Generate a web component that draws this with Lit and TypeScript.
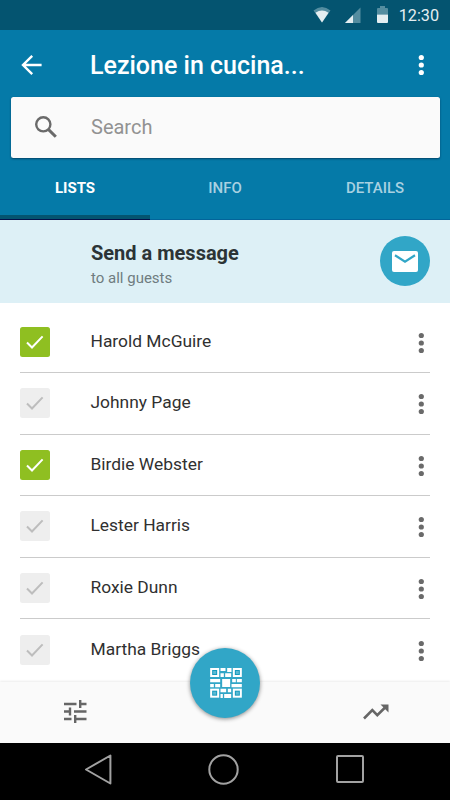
import { LitElement, html, css, svg } from "lit";
import { customElement } from "lit/decorators.js";
import { classMap } from "lit/directives/class-map.js";

interface Guest { name: string; checked: boolean; }

const guests: Guest[] = [
  { name: "Harold McGuire", checked: true },
  { name: "Johnny Page", checked: false },
  { name: "Birdie Webster", checked: true },
  { name: "Lester Harris", checked: false },
  { name: "Roxie Dunn", checked: false },
  { name: "Martha Briggs", checked: false },
];

const dots = html`<svg class="dots" width="8" height="22" viewBox="0 0 8 22" fill="currentColor">
  <circle cx="4.3" cy="3.5" r="2.6" /><circle cx="4.3" cy="11" r="2.6" /><circle cx="4.3" cy="18.5" r="2.6" />
</svg>`;

const finder = (x: number, y: number) => svg`
  <rect x=${x + 3} y=${y + 3} width="21" height="21" stroke="#fff" stroke-width="6" fill="#139bbf" />
  <rect x=${x + 9} y=${y + 9} width="9" height="9" fill="#5db9d2" />`;

@customElement("app-root")
export class AppRoot extends LitElement {
  static styles = css`
    :host { display: flex; flex-direction: column; width: 450px; height: 800px; overflow: hidden;
      background: #fff; font-family: Roboto, "Noto Sans", sans-serif; color: #333; }
    svg { display: block; flex: none; }
    .status { height: 30px; flex: none; box-sizing: border-box; background: #045470; color: #e4eef1; display: flex;
      align-items: center; justify-content: flex-end; padding-right: 11px; font-size: 16.2px; }
    .status .wifi { margin-right: 14px; }
    .status .cell { margin-right: 16px; }
    .status .batt { margin: -2px 11px 0 0; }
    .clock { line-height: 30px; padding-top: 1px; }
    .header { height: 190px; flex: none; box-sizing: border-box; background: #057aa8; color: #fff;
      border-bottom: 1px solid #03649a; display: flex; flex-direction: column; }
    .bar { height: 67px; display: flex; align-items: center; padding: 3px 25px 0 21px; box-sizing: border-box; }
    .title { margin: 2px auto 0 48px; font-size: 25px; font-weight: 500; line-height: 30px; }
    .search { height: 60.5px; margin: 0 10px 0 11px; background: #fafafa; border-radius: 2.5px; display: flex;
      align-items: center; padding-left: 24px; box-shadow: 0 1px 2px rgba(0, 30, 60, .6); box-sizing: border-box; }
    .search .label { margin-left: 34px; font-size: 20px; color: #929292; }
    .tabs { flex: 1; margin-bottom: -1px; display: grid; grid-template-columns: repeat(3, 1fr); text-align: center; }
    .tab { box-sizing: border-box; padding-top: 1px; line-height: 59px; font-size: 15px; font-weight: 500;
      color: #a8d1e1; }
    .tab.active { color: #fff; font-weight: 700;
      background: linear-gradient(#03114a, #03114a) bottom / 100% 1px no-repeat,
        linear-gradient(#045470, #045470) bottom / 100% 5px no-repeat; }
    .message { height: 82.5px; flex: none; box-sizing: border-box; background: #ddf0f6; display: flex;
      align-items: center; justify-content: space-between; padding: 0 20px 0 91px; }
    .copy { padding-top: 6px; }
    .heading { font-size: 20px; font-weight: 700; line-height: 24px; color: #2c3436; }
    .sub { font-size: 15px; line-height: 20px; color: #6f7c80; margin-top: 3px; margin-bottom: -1px; }
    .round { width: 50px; height: 50px; border-radius: 50%; background: #31a6c7; display: grid; place-items: center; }
    .list { height: 379.5px; flex: none; box-sizing: border-box; padding: 9.2px 20px 0; overflow: hidden; }
    .row { height: 61.5px; box-sizing: border-box; border-bottom: 1px solid #cbcbcb; display: flex;
      align-items: center; padding-right: 5px; color: #6a6a6a; }
    .row:last-child { border-bottom: 0; }
    .row .dots { margin-top: 2px; }
    .check { width: 30px; height: 30px; border-radius: 2.5px; background: #eee; color: #bdbdbd;
      display: grid; place-items: center; }
    .check.on { background: #8fbf21; color: #fff; }
    .name { margin: -2.6px auto 0 40.5px; font-size: 17.4px; line-height: 24px; color: #303030; }
    .footer { height: 60.5px; flex: none; box-sizing: border-box; position: relative; background: #fafafa; display: flex;
      justify-content: space-between; align-items: center; padding: 0 61px 1.5px 63px; color: #666;
      box-shadow: 0 -1px 2px rgba(0, 0, 0, .08); }
    .fab { position: absolute; left: 190px; top: -34px; width: 70px; height: 70px; border-radius: 50%;
      background: #31a6c7; display: grid; place-items: center; box-shadow: 0 1px 4px rgba(0, 0, 0, .45); }
    .fab svg { margin: -1px 0 0 2px; }
    .nav { flex: 1; background: #000; display: flex; align-items: center; justify-content: space-between;
      padding: 0 86px 4.5px 84px; }
    .nav .home { margin-right: 1px; }
  `;

  render() {
    return html`
      <div class="status">
        <svg class="wifi" width="18" height="16" viewBox="0 0 18 16">
          <path d="M.5 3.5Q9-3.5 17.5 3.5L9 15.5z" fill="#548da0" />
          <path d="M2.5 5.7Q9 1.5 15.5 5.7L9 15.5z" fill="#e4eef1" />
        </svg>
        <svg class="cell" width="16" height="16" viewBox="0 0 16 16">
          <path d="M0 16L15.5 .5V16z" fill="#548da0" /><path d="M0 16L8 8V16z" fill="#e4eef1" />
        </svg>
        <svg class="batt" width="11" height="17" viewBox="0 0 11 17">
          <path d="M1 2h2V0h5v2h2a1 1 0 0 1 1 1v5.5H0V3a1 1 0 0 1 1-1z" fill="#548da0" />
          <path d="M0 8.5h11V16a1 1 0 0 1-1 1H1a1 1 0 0 1-1-1z" fill="#e4eef1" />
        </svg>
        <span class="clock">12:30</span>
      </div>
      <div class="header">
        <div class="bar">
          <svg width="21" height="20" viewBox="0 0 21 20" fill="none" stroke="#fff" stroke-width="2.4">
            <path d="M11.2 .9L2 10l9.2 9.1M2 10h18.6" />
          </svg>
          <div class="title">Lezione in cucina...</div>
          ${dots}
        </div>
        <div class="search">
          <svg width="22" height="22" viewBox="0 0 22 22" fill="none" stroke="#6a6a6a">
            <circle cx="8.3" cy="8.3" r="7.1" stroke-width="2.4" /><path d="M13.6 13.6l7.2 7.2" stroke-width="3" />
          </svg>
          <span class="label">Search</span>
        </div>
        <div class="tabs">
          <div class="tab active">LISTS</div><div class="tab">INFO</div><div class="tab">DETAILS</div>
        </div>
      </div>
      <div class="message">
        <div class="copy"><div class="heading">Send a message</div><div class="sub">to all guests</div></div>
        <div class="round">
          <svg width="26" height="21" viewBox="0 0 26 21">
            <rect width="26" height="21" rx="2" fill="#fff" />
            <path d="M3 4.2l10 6.4 10-6.4" fill="none" stroke="#31a6c7" stroke-width="2.2" />
          </svg>
        </div>
      </div>
      <div class="list">
        ${guests.map((g) => html`<div class="row">
          <div class=${classMap({ check: true, on: g.checked })}>
            <svg width="18" height="14" viewBox="0 0 18 14" fill="none" stroke="currentColor" stroke-width="2">
              <path d="M1 7.5l5 5L16.6 1.4" />
            </svg>
          </div>
          <div class="name">${g.name}</div>
          ${dots}
        </div>`)}
      </div>
      <div class="footer">
        <svg width="24" height="23" viewBox="0 0 24 23" fill="none" stroke="currentColor" stroke-width="2.4">
          <path d="M1 4h12.5M17.2 0v8M17.2 4H23.5M1 11.5h5.5M7 7.5v8M11 11.5h12.5M1 19h7.5M12.2 15v8M12.2 19h11.3" />
        </svg>
        <div class="fab">
          <svg width="32" height="30" viewBox="0 0 95 90" fill="#fff">
            ${finder(0, 0)}${finder(68, 0)}${finder(0, 62)}${finder(68, 62)}
            <path d="M31 0h15v9H31zM51 0h13v12H51zM31 16h10v11H31zM45 16h18v11H45zM0 33h30v10H0zM0 48h11v10H0zM15 48h15v10H15zM36 33h24v24H36zM66 33h11v10H66zM80 33h15v10H80zM64 48h31v10H64zM31 62h17v11H31zM53 62h10v11H53zM31 78h7v12h-7zM42 78h21v12H42z" />
          </svg>
        </div>
        <svg width="26" height="16" viewBox="0 0 26 16" fill="none" stroke="currentColor" stroke-width="2.6">
          <path d="M1 14.5L9.3 6.2l5 5L22.6 3" /><path d="M17.5 .5h8v8z" fill="currentColor" stroke="none" />
        </svg>
      </div>
      <div class="nav">
        <svg width="28" height="31" viewBox="0 0 28 31" fill="none" stroke="#a2a2a2" stroke-width="2" stroke-linejoin="round">
          <path d="M2 15.5L26.4 1.5v28z" />
        </svg>
        <svg class="home" width="31" height="31" viewBox="0 0 31 31" fill="none" stroke="#a2a2a2" stroke-width="2">
          <circle cx="15.5" cy="15.5" r="14.2" />
        </svg>
        <svg width="28" height="28" viewBox="0 0 28 28" fill="none" stroke="#a2a2a2" stroke-width="2">
          <rect x="1" y="1" width="26" height="26" rx="1" />
        </svg>
      </div>
    `;
  }
}
